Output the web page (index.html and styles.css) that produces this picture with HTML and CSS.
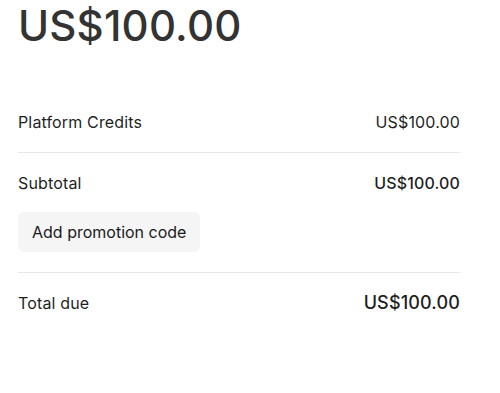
FILE: index.html
```html
<!DOCTYPE html>
<html lang="en">
<head>
<meta charset="utf-8">
<title>Order summary</title>
<link rel="stylesheet" href="styles.css">
</head>
<body>
<main class="summary">
  <h1 class="amount">US$100.00</h1>
  <section class="items">
    <div class="row line-item">
      <span class="label">Platform Credits</span>
      <span class="value">US$100.00</span>
    </div>
    <hr class="divider">
    <div class="row subtotal">
      <span class="label">Subtotal</span>
      <span class="value strong">US$100.00</span>
    </div>
    <div class="promo">
      <button class="promo-btn" type="button">Add promotion code</button>
    </div>
    <hr class="divider">
    <div class="row total">
      <span class="label">Total due</span>
      <span class="value total-value">US$100.00</span>
    </div>
  </section>
</main>
</body>
</html>
```
FILE: styles.css
```css
* { box-sizing: border-box; }
html, body {
  margin: 0;
  padding: 0;
  background: #ffffff;
}
body {
  font-family: Inter, "Noto Sans", "Liberation Sans", sans-serif;
  color: #1a1a1a;
}
.summary {
  width: 460px;
  padding-left: 18px;
}
.amount {
  margin: 0;
  font-size: 42px;
  line-height: 52px;
  font-weight: 500;
  color: #333333;
  letter-spacing: 0.2px;
}
.items {
  margin-top: 42px;
  display: flex;
  flex-direction: column;
}
.row {
  display: flex;
  justify-content: space-between;
  align-items: baseline;
  font-size: 16px;
  line-height: 24px;
  color: #1f1f1f;
  letter-spacing: 0.15px;
}
.line-item { padding: 16px 0 18px; }
.subtotal { padding: 18px 0 0; }
.value.strong { font-weight: 500; }
.divider {
  margin: 0;
  border: 0;
  height: 1px;
  background: #e8e8e8;
}
.promo {
  padding: 17px 0 20px;
}
.promo-btn {
  font-family: inherit;
  font-size: 16px;
  line-height: 24px;
  font-weight: 400;
  letter-spacing: 0;
  color: #1a1a1a;
  background: #f5f5f5;
  border: 0;
  border-radius: 6px;
  padding: 8px 14px;
}
.total { padding-top: 18px; }
.total-value {
  font-size: 18px;
  font-weight: 500;
}
```
